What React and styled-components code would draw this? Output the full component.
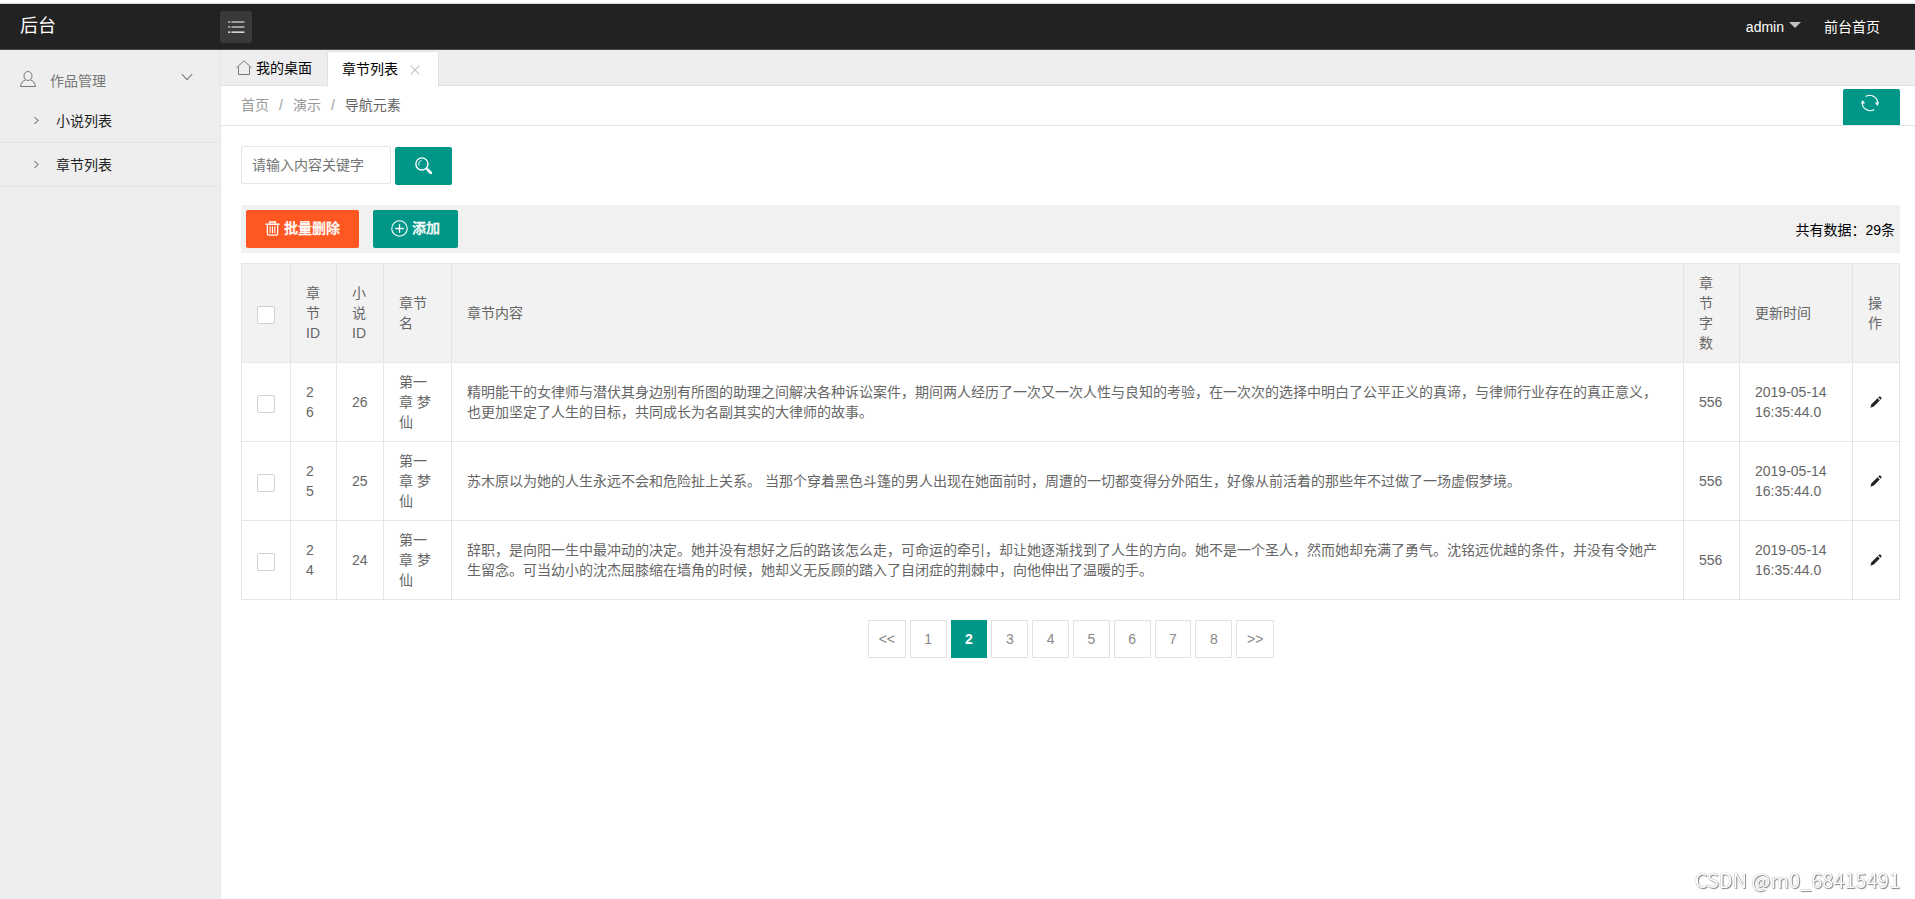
import { useState } from "react"
import styled, { createGlobalStyle } from "styled-components"

const GlobalStyle = createGlobalStyle`
    * {
        box-sizing: border-box;
    }

    body {
        margin: 0;
        background: #fff;
        color: #000;
        font: 14px/24px "Liberation Sans", "Noto Sans CJK SC", sans-serif;
    }
`

const Page = styled.div`
    display: flex;
    flex-direction: column;
    height: 100vh;
    padding-top: 3px;
    overflow: hidden;
`

const Header = styled.header`
    display: flex;
    align-items: center;
    flex: none;
    height: 47px;
    background: #222;
    border-top: 1px solid #d9d9d9;
    border-bottom: 1px solid #484848;
    color: #fff;
`

const Logo = styled.div`
    width: 220px;
    padding: 0 0 2px 20px;
    font-size: 18px;
`

const MenuToggle = styled.button`
    display: flex;
    align-items: center;
    justify-content: center;
    width: 32px;
    height: 32px;
    margin-top: 1px;
    padding: 0;
    border: 0;
    border-radius: 3px;
    background: #393939;
    color: #fff;
`

const HeaderNav = styled.nav`
    display: flex;
    align-items: center;
    margin-left: auto;
    padding-right: 35px;
`

const UserMenu = styled.a`
    display: flex;
    align-items: center;
    gap: 5px;
    margin-right: 23px;
`

const Caret = styled.span`
    border: 6px solid transparent;
    border-top-color: #c2c2c2;
    border-bottom: 0;
    margin-top: -3px;
`

const Body = styled.div`
    display: flex;
    flex: 1;
    min-height: 0;
`

const Sidebar = styled.aside`
    flex: none;
    width: 221px;
    background: #eee;
    border-right: 1px solid #e5e5e5;
`

const MenuGroup = styled.div`
    display: flex;
    align-items: center;
    height: 49px;
    padding: 9px 27px 0 20px;
    color: #777;

    & span {
        flex: 1;
        margin-left: 14px;
        padding-top: 3px;
    }

    & .chevron {
        margin-top: -5px;
    }
`

const MenuItem = styled.a`
    display: flex;
    align-items: center;
    height: 44px;
    padding-left: 33px;
    border-bottom: 1px solid #e5e5e5;
    color: #222;

    & svg {
        margin-right: 16px;
        color: #888;
    }
`

const Main = styled.main`
    flex: 1;
    min-width: 0;
`

const TabBar = styled.div`
    display: flex;
    height: 36px;
    background: #eeeef0;
    border-bottom: 1px solid #e2e2e2;
`

const Tab = styled.div`
    display: flex;
    align-items: center;
    height: 35px;
    padding: 0 15px;

    & .home {
        margin-right: 4px;
        color: #777;
    }

    & .close {
        margin: 2px 3px 0 12px;
        color: #c2c2c2;
    }

    ${(props) =>
        props.$active &&
        `
        height: 36px;
        width: 112px;
        padding: 0 0 2px 14px;
        margin-top: 1px;
        background: #fff;
        border: 1px solid #e2e2e2;
        border-bottom: 0;
        border-radius: 2px 2px 0 0;
    `}
`

const CrumbBar = styled.div`
    display: flex;
    align-items: flex-start;
    justify-content: space-between;
    height: 40px;
    padding: 3px 15px 0 20px;
    border-bottom: 1px solid #e5e5e5;
`

const Crumbs = styled.div`
    display: flex;
    gap: 10px;
    padding-top: 4px;
    color: #999;

    & b {
        font-weight: 400;
        color: #666;
    }
`

const Button = styled.button`
    display: inline-flex;
    align-items: center;
    justify-content: center;
    width: ${(props) => props.$width || 57}px;
    height: 38px;
    padding: 0 0 2px;
    border: 0;
    border-radius: 2px;
    background: ${(props) => (props.$danger ? "#ff5722" : "#009688")};
    color: #fff;
    font: inherit;
    font-weight: 500;
    -webkit-text-stroke: 0.3px #fff;

    & svg {
        margin-right: ${(props) => (props.$width ? 4 : 0)}px;
    }
`

const RefreshButton = styled(Button)`
    height: 36px;
    padding-bottom: 8px;
    padding-right: 3px;
    border-radius: 2px 2px 0 0;
`

const Content = styled.div`
    padding: 20px 15px 0 20px;
`

const Search = styled.form`
    display: flex;
    gap: 4px;

    & button {
        margin-top: 1px;
    }
`

const SearchInput = styled.input`
    width: 150px;
    height: 38px;
    padding: 0 0 0 10px;
    border: 1px solid #e6e6e6;
    border-radius: 2px;
    outline: 0;
    font: inherit;

    &::placeholder {
        color: #757575;
    }
`

const Toolbar = styled.div`
    display: flex;
    align-items: center;
    gap: 14px;
    height: 48px;
    margin-top: 20px;
    padding: 0 5px;
    background: #f1f1f1;
`

const Total = styled.span`
    margin-left: auto;
    padding-top: 2px;
`

const Table = styled.table`
    width: 1659px;
    margin-top: 10px;
    border-collapse: collapse;
    table-layout: fixed;
    color: #666;
    line-height: 20px;

    & th,
    & td {
        padding: 9px 15px;
        border: 1px solid #e6e6e6;
        font-weight: 400;
        text-align: left;
        word-break: break-all;
    }

    & th {
        background: #f2f2f2;
    }
`

const Checkbox = styled.span`
    display: block;
    width: 18px;
    height: 18px;
    margin-top: 3px;
    border: 1px solid ${(props) => (props.$checked ? "#009688" : "#d2d2d2")};
    border-radius: 2px;
    background: ${(props) => (props.$checked ? "#009688" : "#fff")};
`

const Pagination = styled.div`
    display: flex;
    justify-content: center;
    gap: 4px;
    margin-top: 20px;
    padding-left: 1px;
`

const PageLink = styled.a`
    width: ${(props) => (props.$wide ? 38 : 36.8)}px;
    height: 38px;
    border: 1px solid ${(props) => (props.$current ? "#009688" : "#e2e2e2")};
    background: ${(props) => (props.$current ? "#009688" : "#fff")};
    color: ${(props) => (props.$current ? "#fff" : "#888")};
    font-weight: ${(props) => (props.$current ? 700 : 400)};
    line-height: 37px;
    text-align: center;
`

const Watermark = styled.div`
    position: fixed;
    right: 15px;
    bottom: 7px;
    color: #fff;
    font: 20px/24px "Noto Sans CJK SC", sans-serif;
    text-shadow: 0 0 1px #777, 1px 1px 1px #888;
`

const Icon = ({ size = 16, children, ...rest }) => (
    <svg
        width={size}
        height={size}
        viewBox="0 0 16 16"
        fill="none"
        stroke="currentColor"
        strokeWidth="1"
        {...rest}
    >
        {children}
    </svg>
)

const ListIcon = () => (
    <Icon size={18}>
        <path d="M1 3.5h2M4 3.5h11.5M1 8h2M4 8h11.5M1 12.5h2M4 12.5h11.5" />
    </Icon>
)

const UserIcon = () => (
    <Icon>
        <ellipse cx="8" cy="5" rx="4" ry="4.5" />
        <path d="M5.7 8.8C2.5 10 .8 12 .5 15.5h15c-.3-3.500-2-5.500-5.200-6.700" />
    </Icon>
)

const HomeIcon = () => (
    <Icon className="home">
        <path d="M.3 8 8 .8 15.700 8M2.500 6.500v8h11v-8" />
    </Icon>
)

const SearchIcon = () => (
    <Icon size={17}>
        <circle cx="6.500" cy="6.500" r="5.700" strokeWidth="1.300" />
        <path d="M6 3.300c-2 .4-3 2.500-2.200 4.800" strokeWidth=".9" />
        <path d="m10.500 10.500 1.500 1.500" />
        <path d="m12 12 3 3" strokeWidth="2.600" strokeLinecap="round" />
    </Icon>
)

const TrashIcon = () => (
    <Icon size={15}>
        <path d="M5 2.500V1h6v1.500M.5 3.500h15" strokeWidth="1.600" />
        <path d="M2.500 4v9.500q0 1.500 1.500 1.500h8q1.500 0 1.500-1.500V4" strokeWidth="1.300" />
        <path d="M5.500 5.500v7.500M8 5.500v7.500M10.500 5.500v7.500" strokeWidth="1.200" />
    </Icon>
)

const AddIcon = () => (
    <Icon size={17}>
        <circle cx="8" cy="8" r="7.300" />
        <path d="M8 4v8M4 8h8" strokeWidth="1.200" />
    </Icon>
)

const RefreshIcon = () => (
    <Icon size={18}>
        <path d="M4.200 2.300A7 7 0 0 1 14.900 7.500M11.800 13.700A7 7 0 0 1 1.100 8.500" />
        <path d="m12.300 7.700 2.600 2.900 1-3.400zM3.700 8.300 1.100 5.400l-1 3.400z" fill="currentColor" stroke="none" />
    </Icon>
)

const EditIcon = () => (
    <Icon size={12} style={{ display: "block", marginLeft: 2 }}>
        <path d="M.5 15.500 2 11l8-8 3 3-8 8z" fill="#222" stroke="none" />
        <path d="m11 2 1.200-1.200q.8-.6 1.600 0l1.400 1.400q.6.8 0 1.600L14 5z" fill="#222" stroke="none" />
    </Icon>
)

const columns = [
    { title: "章节ID", width: 46 },
    { title: "小说ID", width: 47 },
    { title: "章节名", width: 68 },
    { title: "章节内容" },
    { title: "章节字数", width: 56 },
    { title: "更新时间", width: 113 },
    { title: "操作", width: 47 },
]

const chapters = [
    {
        id: 26,
        text: "精明能干的女律师与潜伏其身边别有所图的助理之间解决各种诉讼案件，期间两人经历了一次又一次人性与良知的考验，在一次次的选择中明白了公平正义的真谛，与律师行业存在的真正意义，也更加坚定了人生的目标，共同成长为名副其实的大律师的故事。",
    },
    {
        id: 25,
        text: "苏木原以为她的人生永远不会和危险扯上关系。 当那个穿着黑色斗篷的男人出现在她面前时，周遭的一切都变得分外陌生，好像从前活着的那些年不过做了一场虚假梦境。",
    },
    {
        id: 24,
        text: "辞职，是向阳一生中最冲动的决定。她并没有想好之后的路该怎么走，可命运的牵引，却让她逐渐找到了人生的方向。她不是一个圣人，然而她却充满了勇气。沈铭远优越的条件，并没有令她产生留念。可当幼小的沈杰屈膝缩在墙角的时候，她却义无反顾的踏入了自闭症的荆棘中，向他伸出了温暖的手。",
    },
]

const pages = ["<<", "1", "2", "3", "4", "5", "6", "7", "8", ">>"]

const ChapterTable = () => {
    const [checked, setChecked] = useState([])
    const allChecked = checked.length === chapters.length

    const toggle = (id) => {
        setChecked(
            checked.includes(id)
                ? checked.filter((item) => item !== id)
                : [...checked, id]
        )
    }

    const toggleAll = () => {
        setChecked(allChecked ? [] : chapters.map((item) => item.id))
    }

    return (
        <Table>
            <colgroup>
                <col width="49" />
                {columns.map((col) => (
                    <col key={col.title} width={col.width} />
                ))}
            </colgroup>
            <thead>
                <tr>
                    <th>
                        <Checkbox $checked={allChecked} onClick={toggleAll} />
                    </th>
                    {columns.map((col) => (
                        <th key={col.title}>{col.title}</th>
                    ))}
                </tr>
            </thead>
            <tbody>
                {chapters.map((item) => (
                    <tr key={item.id}>
                        <td>
                            <Checkbox
                                $checked={checked.includes(item.id)}
                                onClick={() => toggle(item.id)}
                            />
                        </td>
                        <td>{item.id}</td>
                        <td>{item.id}</td>
                        <td>第一章 梦仙</td>
                        <td>{item.text}</td>
                        <td>556</td>
                        <td>2019-05-14 16:35:44.0</td>
                        <td>
                            <EditIcon />
                        </td>
                    </tr>
                ))}
            </tbody>
        </Table>
    )
}

const App = () => {
    const [page, setPage] = useState("2")

    return (
        <Page>
            <GlobalStyle />
            <Header>
                <Logo>后台</Logo>
                <MenuToggle>
                    <ListIcon />
                </MenuToggle>
                <HeaderNav>
                    <UserMenu>
                        admin <Caret />
                    </UserMenu>
                    <a>前台首页</a>
                </HeaderNav>
            </Header>
            <Body>
                <Sidebar>
                    <MenuGroup>
                        <UserIcon />
                        <span>作品管理</span>
                        <Icon size={12} className="chevron">
                            <path d="m1 4 7 7.500L15 4" strokeWidth="1.400" />
                        </Icon>
                    </MenuGroup>
                    {["小说列表", "章节列表"].map((name) => (
                        <MenuItem key={name}>
                            <Icon size={7}>
                                <path d="m3 0 9 8-9 8" strokeWidth="2.400" />
                            </Icon>
                            {name}
                        </MenuItem>
                    ))}
                </Sidebar>
                <Main>
                    <TabBar>
                        <Tab>
                            <HomeIcon />
                            我的桌面
                        </Tab>
                        <Tab $active>
                            章节列表
                            <Icon size={10} className="close">
                                <path d="m1 1 14 14M15 1 1 15" strokeWidth="1.700" />
                            </Icon>
                        </Tab>
                    </TabBar>
                    <CrumbBar>
                        <Crumbs>
                            <span>首页</span>
                            <span>/</span>
                            <span>演示</span>
                            <span>/</span>
                            <b>导航元素</b>
                        </Crumbs>
                        <RefreshButton>
                            <RefreshIcon />
                        </RefreshButton>
                    </CrumbBar>
                    <Content>
                        <Search>
                            <SearchInput placeholder="请输入内容关键字" />
                            <Button type="button">
                                <SearchIcon />
                            </Button>
                        </Search>
                        <Toolbar>
                            <Button $danger $width={113}>
                                <TrashIcon />
                                批量删除
                            </Button>
                            <Button $width={85}>
                                <AddIcon />
                                添加
                            </Button>
                            <Total>共有数据：29条</Total>
                        </Toolbar>
                        <ChapterTable />
                        <Pagination>
                            {pages.map((label) => (
                                <PageLink
                                    key={label}
                                    $wide={label.length > 1}
                                    $current={label === page}
                                    onClick={() => setPage(label)}
                                >
                                    {label}
                                </PageLink>
                            ))}
                        </Pagination>
                    </Content>
                </Main>
            </Body>
            <Watermark>CSDN @m0_68415491</Watermark>
        </Page>
    )
}

export default App
